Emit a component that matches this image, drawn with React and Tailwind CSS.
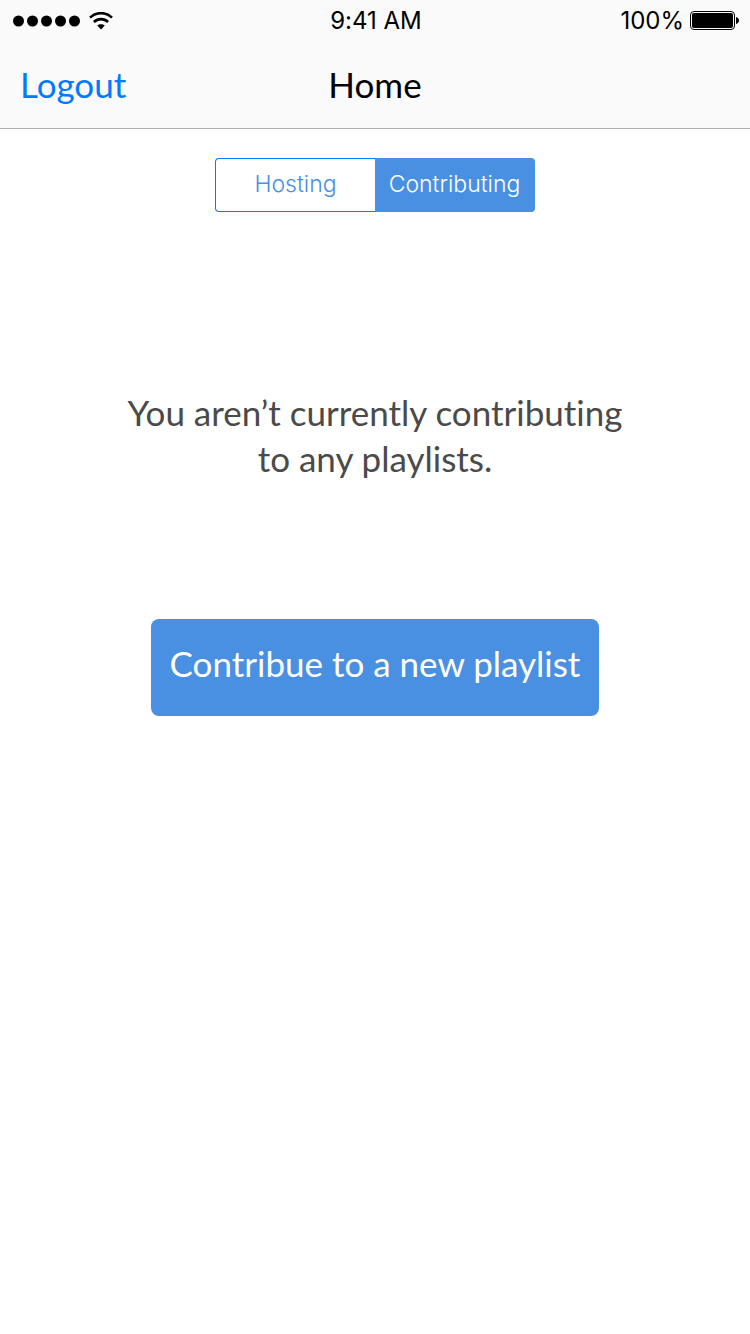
import { useState } from "react";

const TABS = ["Hosting", "Contributing"];

function SignalDots() {
  return (
    <svg width="68" height="12" viewBox="0 0 68 12" fill="currentColor" aria-hidden="true">
      {[5.5, 19.5, 33.5, 47.5, 61.5].map((cx) => (
        <circle key={cx} cx={cx} cy="6" r="5.5" />
      ))}
    </svg>
  );
}

function WifiIcon() {
  return (
    <svg width="24" height="18" viewBox="0 0 24 18" fill="none" stroke="currentColor" aria-hidden="true">
      <path d="M1 5.6C7.3-.4 16.7-.4 23 5.6" strokeWidth="2.6" />
      <path d="M4.9 10C9 6.1 15 6.1 19.1 10" strokeWidth="2.6" />
      <path d="M12 17.6L8.2 13.6C10.3 11.8 13.7 11.8 15.8 13.6Z" fill="currentColor" stroke="none" />
    </svg>
  );
}

function BatteryIcon() {
  return (
    <svg width="49" height="19" viewBox="0 0 49 19" aria-hidden="true">
      <rect x=".5" y=".5" width="44" height="18" rx="3.5" fill="none" stroke="currentColor" />
      <rect x="2" y="2" width="41" height="15" rx="2" fill="currentColor" />
      <path d="M46 6c1.8.6 3 1.900 3 3.500s-1.200 2.900-3 3.500z" fill="currentColor" />
    </svg>
  );
}

function StatusBar() {
  return (
    <div className="grid h-10 grid-cols-3 items-center pr-[11px] pl-[13px] font-['Inter',sans-serif] text-2xl leading-10">
      <div className="flex items-center gap-2">
        <SignalDots />
        <WifiIcon />
      </div>
      <span className="pt-px text-center">9:41 AM</span>
      <div className="flex items-center justify-end gap-1.5">
        <span className="pt-px">100%</span>
        <BatteryIcon />
      </div>
    </div>
  );
}

export default function App() {
  const [active, setActive] = useState("Contributing");

  return (
    <div className="min-h-screen bg-white font-['Lato',sans-serif] [font-variant-ligatures:none]">
      <header className="border-b border-[#b2b2b2] bg-[#fafafa] text-black">
        <StatusBar />
        <nav className="grid h-22 grid-cols-3 items-center px-5 text-[35px] leading-10">
          <a href="#logout" className="justify-self-start text-[#007aff]">
            Logout
          </a>
          <h1 className="text-center">Home</h1>
        </nav>
      </header>

      <main className="flex flex-col items-center px-6 pt-[29px]">
        <div
          role="group"
          aria-label="Playlist role"
          className="grid h-[54px] w-80 grid-cols-2 font-['Inter',sans-serif] text-[23px] font-light"
        >
          {TABS.map((tab) => (
            <button
              key={tab}
              type="button"
              aria-pressed={active === tab}
              onClick={() => setActive(tab)}
              className="border border-[#007aff] bg-white pb-0.5 text-center text-[#4990e2] first:rounded-l first:border-r-0 last:rounded-r last:border-l-0 aria-pressed:border-[#4990e2] aria-pressed:bg-[#4990e2] aria-pressed:text-white"
            >
              {tab}
            </button>
          ))}
        </div>

        <p className="mt-[177px] max-w-[520px] text-center text-[35px] leading-[46px] text-[#4a4a4a]">
          You aren’t currently contributing to any playlists.
        </p>

        <button
          type="button"
          className="mt-[138px] h-[97px] w-[448px] max-w-full rounded-lg bg-[#4990e2] pb-2 text-[35px] text-white"
        >
          Contribue to a new playlist
        </button>
      </main>
    </div>
  );
}
